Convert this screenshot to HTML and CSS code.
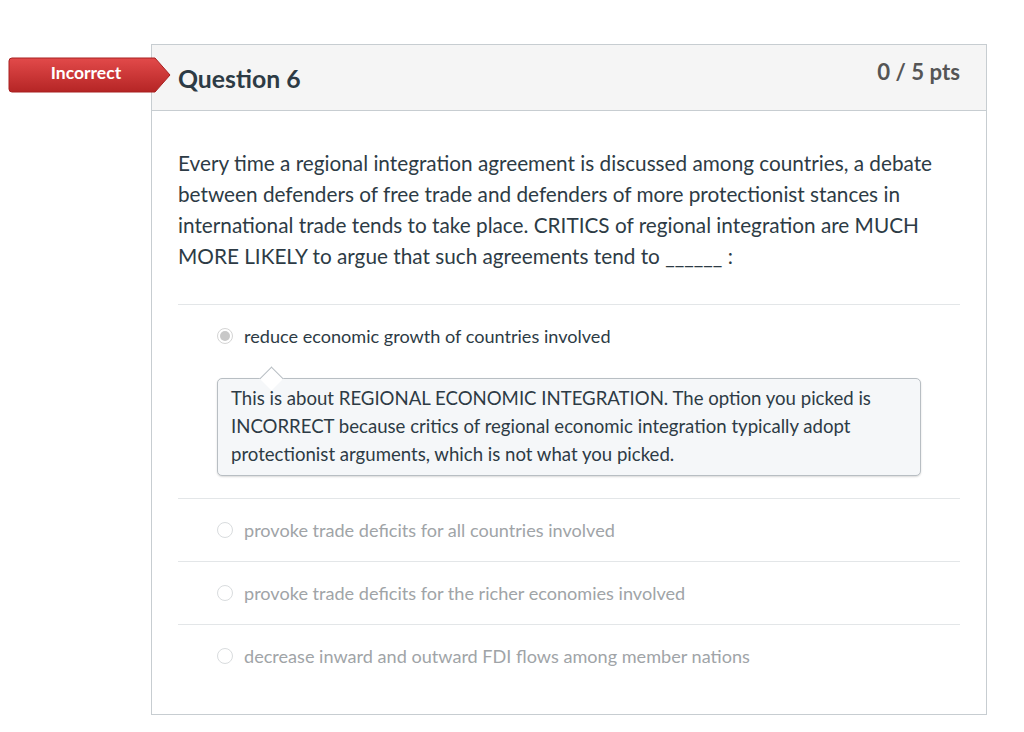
FILE: index.html
```html
<!DOCTYPE html>
<html>
<head>
<meta charset="utf-8">
<link rel="stylesheet" href="styles.css">
</head>
<body>
<div class="card">
  <div class="badge">
    <svg class="badge-bg" width="164" height="36" viewBox="0 0 164 36">
      <defs>
        <linearGradient id="g" x1="0" y1="0" x2="0" y2="1">
          <stop offset="0" stop-color="#e24a4a"/>
          <stop offset="1" stop-color="#b52525"/>
        </linearGradient>
      </defs>
      <path d="M4 1 H147 L162 18 L147 35 H4 Q1 35 1 32 V4 Q1 1 4 1 Z" fill="url(#g)" stroke="#a82020" stroke-width="1"/>
    </svg>
    <span class="badge-text">Incorrect</span>
  </div>
  <div class="header">
    <h2 class="title">Question 6</h2>
    <div class="pts">0 / 5 pts</div>
  </div>
  <div class="content">
    <p class="question">Every time a regional integration agreement is discussed among countries, a debate between defenders of free trade and defenders of more protectionist stances in international trade tends to take place. CRITICS of regional integration are MUCH MORE LIKELY to argue that such agreements tend to ______ :</p>
    <div class="answers">
      <div class="answer selected">
        <div class="row"><span class="radio checked"></span><span class="label">reduce economic growth of countries involved</span></div>
        <div class="comment">This is about REGIONAL ECONOMIC INTEGRATION. The option you picked is INCORRECT because critics of regional economic integration typically adopt protectionist arguments, which is not what you picked.</div>
      </div>
      <div class="answer">
        <div class="row"><span class="radio"></span><span class="label muted">provoke trade deficits for all countries involved</span></div>
      </div>
      <div class="answer">
        <div class="row"><span class="radio"></span><span class="label muted">provoke trade deficits for the richer economies involved</span></div>
      </div>
      <div class="answer">
        <div class="row"><span class="radio"></span><span class="label muted">decrease inward and outward FDI flows among member nations</span></div>
      </div>
    </div>
  </div>
</div>
</body>
</html>
```

FILE: styles.css
```css
* { box-sizing: border-box; }
html, body { margin: 0; padding: 0; background: #fff; }
body {
  font-family: Lato, "Open Sans", "Liberation Sans", sans-serif;
  color: #2d3b45;
}
.card {
  position: relative;
  margin: 44px 0 0 151px;
  width: 836px;
  height: 671px;
  border: 1px solid #c7cdd1;
}
.badge {
  position: absolute;
  left: -144px;
  top: 12px;
  width: 164px;
  height: 36px;
}
.badge-bg { position: absolute; left: 0; top: 0; }
.badge-text {
  position: absolute;
  left: 3px;
  top: 0;
  width: 150px;
  line-height: 32px;
  text-align: center;
  color: #fff;
  font-weight: 700;
  font-size: 17.5px;
}
.header {
  height: 66px;
  background: #f5f5f5;
  border-bottom: 1px solid #c7cdd1;
  display: flex;
  justify-content: space-between;
  align-items: flex-start;
  padding: 0 26px;
}
.title {
  margin: 19px 0 0 0;
  font-size: 24.8px;
  font-weight: 700;
  line-height: 30px;
  color: #2d3b45;
}
.pts {
  margin-top: 14px;
  font-size: 22.2px;
  font-weight: 700;
  line-height: 26px;
  color: #555;
}
.content {
  padding: 37px 26px 0 26px;
}
.question {
  margin: 0;
  font-size: 20.75px;
  line-height: 31px;
}
.answers { margin-top: 32px; }
.answer {
  border-top: 1px solid #e3e6e8;
}
.row {
  height: 62px;
  display: flex;
  align-items: center;
  padding-left: 39px;
}
.radio {
  width: 16px;
  height: 16px;
  border-radius: 50%;
  border: 1px solid #d9dcde;
  background: #fff;
  margin-right: 11px;
  flex: none;
  position: relative;
}
.radio.checked {
  border: 1px solid #d4d4d4;
  background: #fff;
}
.radio.checked::after {
  content: "";
  position: absolute;
  left: 2px;
  top: 2px;
  width: 10px;
  height: 10px;
  border-radius: 50%;
  background: #c8c8c8;
}
.label {
  font-size: 18.1px;
  color: #2d3b45;
}
.label.muted { color: #a0a4a7; }
.comment {
  position: relative;
  margin: 11px 0 22px 39px;
  width: 704px;
  border: 1px solid #b8bec3;
  border-radius: 5px;
  background: #f5f7f9;
  padding: 5px 14px 7px 13px;
  font-size: 18.6px;
  line-height: 28px;
  box-shadow: 0 1px 2px rgba(0,0,0,0.15);
}
.comment::before {
  content: "";
  position: absolute;
  left: 45px;
  top: -9px;
  width: 16px;
  height: 16px;
  background: #fff;
  border-left: 1px solid #b8bec3;
  border-top: 1px solid #b8bec3;
  transform: rotate(45deg);
}
```
